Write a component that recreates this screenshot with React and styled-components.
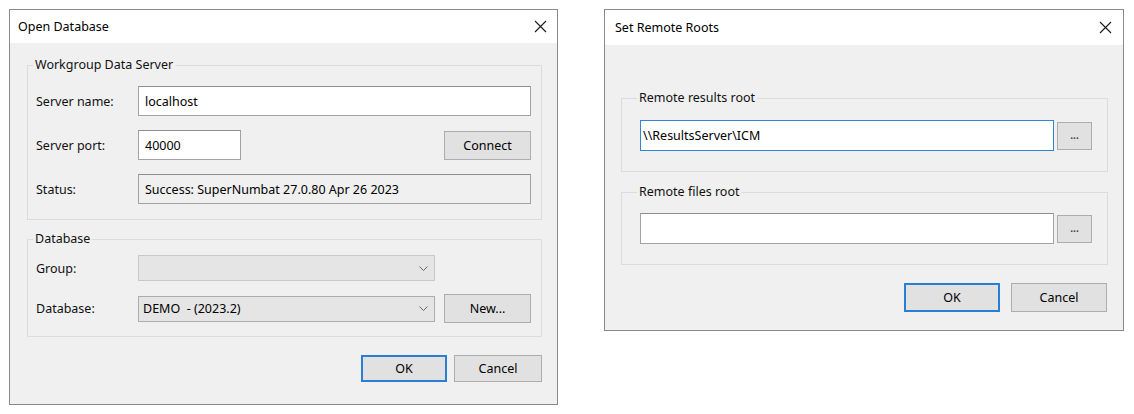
import React from 'react';
import styled, { createGlobalStyle } from 'styled-components';

const Global = createGlobalStyle`
  html, body { margin: 0; padding: 0; background: #ffffff; }
  body {
    font-family: "Noto Sans", "Open Sans", sans-serif;
    font-size: 12.5px;
    color: #111;
  }
  * { box-sizing: border-box; }
`;

const Page = styled.div`
  display: flex;
  align-items: flex-start;
  gap: 46px;
  padding: 9px 0 0 9px;
  width: 1134px;
  height: 414px;
`;

const Window = styled.div`
  width: ${p => p.$w}px;
  height: ${p => p.$h}px;
  border: 1px solid #8a8a8a;
  background: #f0f0f0;
  display: flex;
  flex-direction: column;
`;

const TitleBar = styled.div`
  flex: none;
  height: ${p => p.$h}px;
  background: #ffffff;
  display: flex;
  align-items: center;
  justify-content: space-between;
  padding: 0 ${p => p.$pr}px 0 ${p => p.$pl}px;
`;

const TitleText = styled.span`
  font-size: 12.5px;
  color: #000;
`;

const CloseBtn = styled.svg`
  width: 13px;
  height: 13px;
  display: block;
`;

const Body = styled.div`
  flex: 1;
  display: flex;
  flex-direction: column;
  padding: ${p => p.$pad};
`;

const Group = styled.fieldset`
  margin: ${p => p.$mt || 0}px 0 0 0;
  min-width: 0;
  border: 1px solid #dcdcdc;
  padding: ${p => p.$pad};
  display: flex;
  flex-direction: column;
  gap: ${p => p.$gap || 0}px;
`;

const Legend = styled.legend`
  padding: 0 2px;
  margin-left: -3px;
  line-height: 16px;
  font-size: 12.5px;
  color: #111;
`;

const Row = styled.div`
  display: flex;
  align-items: center;
  height: ${p => p.$h}px;
  gap: ${p => p.$gap || 0}px;
`;

const Label = styled.span`
  width: 102px;
  flex: none;
`;

const Field = styled.div`
  height: ${p => p.$h || 30}px;
  width: ${p => (p.$w ? `${p.$w}px` : 'auto')};
  flex: ${p => (p.$w ? 'none' : '1')};
  display: flex;
  align-items: center;
  padding-left: ${p => p.$pl ?? 6}px;
  background: ${p => (p.$readonly ? '#f0f0f0' : '#ffffff')};
  border: 1px solid ${p => (p.$focus ? '#2f86d6' : '#a2a2a2')};
  border-top-color: ${p => (p.$focus ? '#2f86d6' : '#8e8e8e')};
  white-space: pre;
  color: #000;
`;

const Spacer = styled.div`
  flex: 1;
`;

const Combo = styled.div`
  width: 297px;
  height: 26px;
  flex: none;
  display: flex;
  align-items: center;
  justify-content: space-between;
  padding: 0 6px 0 4px;
  background: #e5e5e5;
  border: 1px solid ${p => (p.$disabled ? '#c8c8c8' : '#adadad')};
  white-space: pre;
  color: #000;
`;

const Chevron = styled.svg`
  width: 9px;
  height: 5px;
  display: block;
`;

const Button = styled.button`
  font-family: inherit;
  font-size: 12.5px;
  color: #000;
  width: ${p => p.$w}px;
  height: ${p => p.$h}px;
  flex: none;
  padding: 0;
  margin: 0;
  background: #e1e1e1;
  border: 1px solid #adadad;
  ${p => p.$default && `border: 2px solid #2a7fd4;`}
  display: flex;
  align-items: center;
  justify-content: center;
`;

const Dots = styled.span`
  font-size: 10px;
  font-weight: 700;
  color: #444;
  line-height: 1;
  padding-bottom: 2px;
`;

const ButtonRow = styled.div`
  display: flex;
  justify-content: flex-end;
  gap: ${p => p.$gap}px;
  margin-top: ${p => p.$mt}px;
  padding-right: ${p => p.$pr || 0}px;
`;

const CloseIcon = () => (
  <CloseBtn viewBox="0 0 13 13">
    <path d="M1 1 L12 12 M12 1 L1 12" stroke="#1a1a1a" strokeWidth="1.1" fill="none" />
  </CloseBtn>
);

const ChevronIcon = () => (
  <Chevron viewBox="0 0 9 5">
    <polyline points="0.5,0.5 4.5,4.5 8.5,0.5" stroke="#666" strokeWidth="1" fill="none" />
  </Chevron>
);

function OpenDatabase() {
  return (
    <Window $w={549} $h={396}>
      <TitleBar $h={33} $pl={8} $pr={10}>
        <TitleText>Open Database</TitleText>
        <CloseIcon />
      </TitleBar>
      <Body $pad="14px 15px 0 17px">
        <Group $pad="13px 10px 15px 8px" $gap={14}>
          <Legend>Workgroup Data Server</Legend>
          <Row $h={30}>
            <Label>Server name:</Label>
            <Field>localhost</Field>
          </Row>
          <Row $h={30}>
            <Label>Server port:</Label>
            <Field $w={103}>40000</Field>
            <Spacer />
            <Button $w={87} $h={29}>Connect</Button>
          </Row>
          <Row $h={30}>
            <Label>Status:</Label>
            <Field $readonly>Success: SuperNumbat 27.0.80 Apr 26 2023</Field>
          </Row>
        </Group>
        <Group $mt={11} $pad="8px 10px 13px 8px" $gap={13}>
          <Legend>Database</Legend>
          <Row $h={26}>
            <Label>Group:</Label>
            <Combo $disabled>
              <span />
              <ChevronIcon />
            </Combo>
          </Row>
          <Row $h={29}>
            <Label>Database:</Label>
            <Combo>
              <span>DEMO  - (2023.2)</span>
              <ChevronIcon />
            </Combo>
            <Spacer />
            <Button $w={87} $h={29}>New...</Button>
          </Row>
        </Group>
        <ButtonRow $gap={7} $mt={18}>
          <Button $w={86} $h={27} $default>OK</Button>
          <Button $w={88} $h={27}>Cancel</Button>
        </ButtonRow>
      </Body>
    </Window>
  );
}

function RemoteRoots() {
  return (
    <Window $w={520} $h={322}>
      <TitleBar $h={35} $pl={10} $pr={11}>
        <TitleText>Set Remote Roots</TitleText>
        <CloseIcon />
      </TitleBar>
      <Body $pad="45px 15px 0 16px">
        <Group $pad="14px 15px 20px 18px">
          <Legend>Remote results root</Legend>
          <Row $h={31} $gap={3}>
            <Field $h={31} $pl={2} $focus>\\ResultsServer\ICM</Field>
            <Button $w={35} $h={28}><Dots>...</Dots></Button>
          </Row>
        </Group>
        <Group $mt={12} $pad="13px 15px 20px 18px">
          <Legend>Remote files root</Legend>
          <Row $h={31} $gap={3}>
            <Field $h={31} $pl={2} />
            <Button $w={35} $h={28}><Dots>...</Dots></Button>
          </Row>
        </Group>
        <ButtonRow $gap={11} $mt={18} $pr={1}>
          <Button $w={96} $h={29} $default>OK</Button>
          <Button $w={96} $h={29}>Cancel</Button>
        </ButtonRow>
      </Body>
    </Window>
  );
}

export default function App() {
  return (
    <>
      <Global />
      <Page>
        <OpenDatabase />
        <RemoteRoots />
      </Page>
    </>
  );
}
